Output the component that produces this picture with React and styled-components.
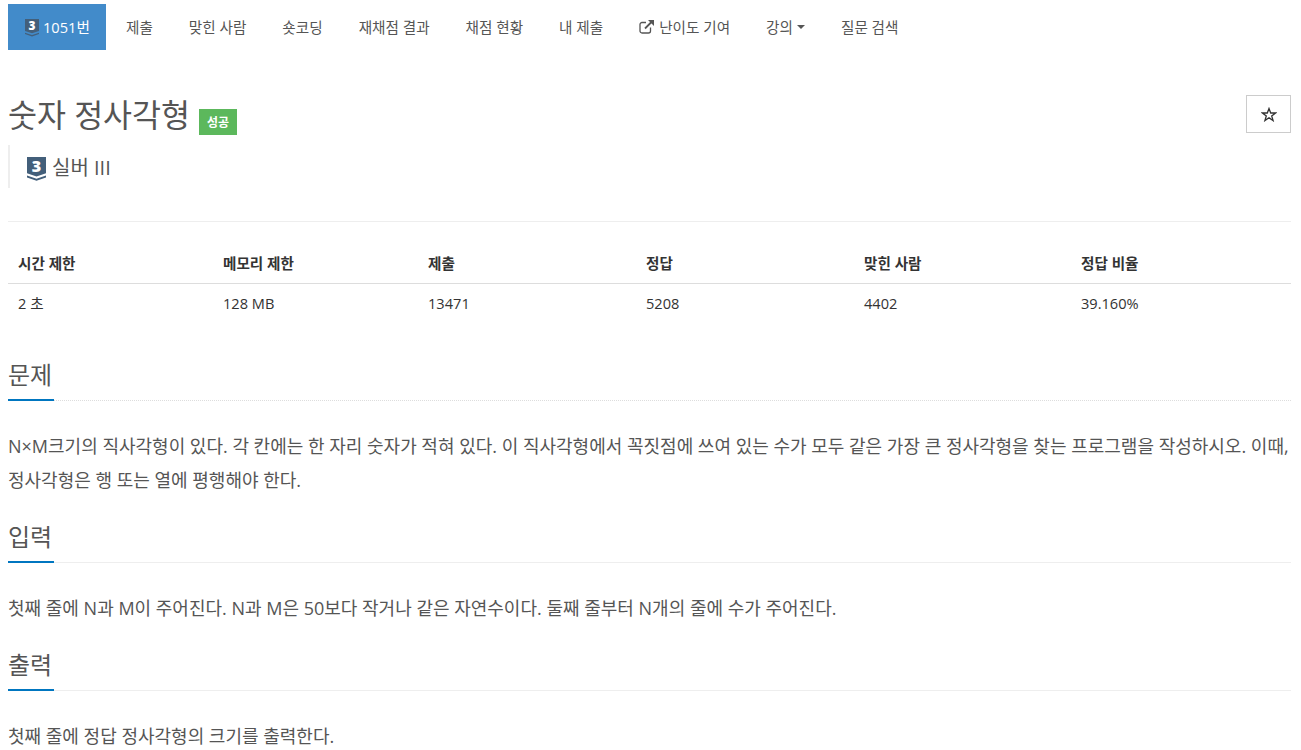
import styled, { createGlobalStyle } from "styled-components";

const GlobalStyle = createGlobalStyle`
  html, body { margin: 0; padding: 0; background: #fff; overflow: hidden; }
  body {
    font-family: "Open Sans", "Noto Sans CJK KR", sans-serif;
    color: #333;
  }
  * { box-sizing: border-box; }
`;

const columns = [
  { title: "시간 제한", value: "2 초", width: 205 },
  { title: "메모리 제한", value: "128 MB", width: 205 },
  { title: "제출", value: "13471", width: 218 },
  { title: "정답", value: "5208", width: 218 },
  { title: "맞힌 사람", value: "4402", width: 217 },
  { title: "정답 비율", value: "39.160%", width: 220 },
];

const menu = ["제출", "맞힌 사람", "숏코딩", "재채점 결과", "채점 현황", "내 제출"];

function TierBadge({ width }) {
  return (
    <BadgeSvg width={width} height={width * 1.25} viewBox="0 0 20 25">
      <path d="M0 0H20V17L10 20.5L0 17Z" fill="#435f7a" />
      <path d="M0 19.5L10 23L20 19.5V21.5L10 25L0 21.5Z" fill="#435f7a" />
      <text x="10" y="15.5" textAnchor="middle" fontSize="17" fontWeight="800" fill="#fff" fontFamily="Open Sans">3</text>
    </BadgeSvg>
  );
}

function LinkIcon() {
  return (
    <svg width="16" height="15" viewBox="0 0 16 15" fill="none" stroke="#555">
      <path d="M11.5 8.5V12A2 2 0 0 1 9.5 14H3A2 2 0 0 1 1 12V5.5A2 2 0 0 1 3 3.5H7" strokeWidth="1.3" />
      <path d="M6 9.5L13 2.5" strokeWidth="1.8" />
      <path d="M9 1H15V7Z" fill="#555" stroke="none" />
    </svg>
  );
}

function StarIcon() {
  return (
    <svg width="16" height="15" viewBox="0 0 16 15" fill="none" stroke="#333" strokeWidth="1.3">
      <path d="M8 1.5L9.7 6H14.6L10.7 8.9L12.1 13.6L8 10.8L3.9 13.6L5.3 8.9L1.4 6H6.3Z" />
    </svg>
  );
}

export default function App() {
  return (
    <Page>
      <GlobalStyle />
      <Nav>
        <ActiveItem>
          <TierBadge width={14} />
          <span>1051번</span>
        </ActiveItem>
        {menu.map((m) => (
          <NavItem key={m}>{m}</NavItem>
        ))}
        <NavItem>
          <LinkIcon />
          <span>난이도 기여</span>
        </NavItem>
        <NavItem>
          <span>강의</span>
          <Caret />
        </NavItem>
        <NavItem>질문 검색</NavItem>
      </Nav>

      <TitleRow>
        <TitleLeft>
          <Title>숫자 정사각형</Title>
          <Label>성공</Label>
        </TitleLeft>
        <StarButton>
          <StarIcon />
        </StarButton>
      </TitleRow>

      <Tier>
        <TierBadge width={19} />
        <span>실버 III</span>
      </Tier>

      <Rule />

      <Table>
        <thead>
          <tr>
            {columns.map((c) => (
              <Th key={c.title} $width={c.width}>{c.title}</Th>
            ))}
          </tr>
        </thead>
        <tbody>
          <tr>
            {columns.map((c) => (
              <Td key={c.title}>{c.value}</Td>
            ))}
          </tr>
        </tbody>
      </Table>

      <Section $top={37}>
        <Heading><span>문제</span></Heading>
        <Body>
          N×M크기의 직사각형이 있다. 각 칸에는 한 자리 숫자가 적혀 있다. 이 직사각형에서 꼭짓점에 쓰여 있는 수가 모두 같은 가장 큰 정사각형을 찾는 프로그램을 작성하시오. 이때, 정사각형은 행 또는 열에 평행해야 한다.
        </Body>
      </Section>

      <Section $top={24}>
        <Heading $solid><span>입력</span></Heading>
        <Body>첫째 줄에 N과 M이 주어진다. N과 M은 50보다 작거나 같은 자연수이다. 둘째 줄부터 N개의 줄에 수가 주어진다.</Body>
      </Section>

      <Section $top={24}>
        <Heading $solid><span>출력</span></Heading>
        <Body>첫째 줄에 정답 정사각형의 크기를 출력한다.</Body>
      </Section>
    </Page>
  );
}

const Page = styled.div`
  width: 1301px;
  height: 750px;
  padding: 4px 10px 0 8px;
  overflow: hidden;
`;

const BadgeSvg = styled.svg`
  flex: none;
  margin-top: 4px;
  overflow: visible;
`;

const Nav = styled.nav`
  display: flex;
  height: 46px;
`;

const NavItem = styled.a`
  display: flex;
  align-items: center;
  gap: 4px;
  padding: 0 18px 2px;
  font-size: 14.6px;
  color: #555;
  white-space: nowrap;
`;

const ActiveItem = styled(NavItem)`
  width: 98px;
  margin-right: 2px;
  padding: 0 0 2px 17px;
  background: #428bca;
  color: #fff;
`;

const Caret = styled.i`
  width: 0;
  height: 0;
  border-left: 4px solid transparent;
  border-right: 4px solid transparent;
  border-top: 4px solid #555;
  margin-top: 2px;
`;

const TitleRow = styled.div`
  display: flex;
  justify-content: space-between;
  align-items: flex-start;
  margin-top: 45px;
  height: 50px;
`;

const TitleLeft = styled.div`
  display: flex;
  align-items: center;
  gap: 9px;
  height: 40px;
`;

const Title = styled.h1`
  margin: 0;
  font-size: 31.5px;
  font-weight: 400;
  line-height: 40px;
  color: #555;
`;

const Label = styled.span`
  display: flex;
  align-items: center;
  justify-content: center;
  width: 38px;
  height: 26px;
  margin-top: 13px;
  background: #5cb85c;
  color: #fff;
  font-size: 12px;
  font-weight: 700;
`;

const StarButton = styled.button`
  display: flex;
  align-items: center;
  justify-content: center;
  width: 45px;
  height: 38px;
  padding: 0;
  background: #fff;
  border: 1px solid #ccc;
`;

const Tier = styled.div`
  display: flex;
  align-items: center;
  gap: 6px;
  height: 43px;
  padding-left: 17px;
  border-left: 2px solid #eee;
  font-size: 20px;
  color: #555;
`;

const Rule = styled.hr`
  margin: 33px 0 0;
  border: 0;
  border-top: 1px solid #eee;
`;

const Table = styled.table`
  width: 1283px;
  margin-top: 21px;
  border-collapse: collapse;
  table-layout: fixed;
  font-size: 14.6px;
`;

const Th = styled.th`
  width: ${(p) => p.$width}px;
  height: 40px;
  padding: 0 10px;
  text-align: left;
  font-weight: 700;
  border-bottom: 1px solid #ddd;
`;

const Td = styled.td`
  height: 39px;
  padding: 0 10px;
`;

const Section = styled.section`
  margin-top: ${(p) => p.$top}px;
`;

const Heading = styled.h2`
  margin: 0;
  height: 42px;
  font-size: 24px;
  font-weight: 400;
  line-height: 32px;
  color: #555;
  border-bottom: 1px ${(p) => (p.$solid ? "solid #eee" : "dotted #ddd")};

  span {
    display: inline-block;
    height: 42px;
    min-width: 46px;
    border-bottom: 2px solid #0076c0;
  }
`;

const Body = styled.p`
  margin: 28px 0 0;
  font-size: 18px;
  line-height: 34px;
  color: #555;
`;
